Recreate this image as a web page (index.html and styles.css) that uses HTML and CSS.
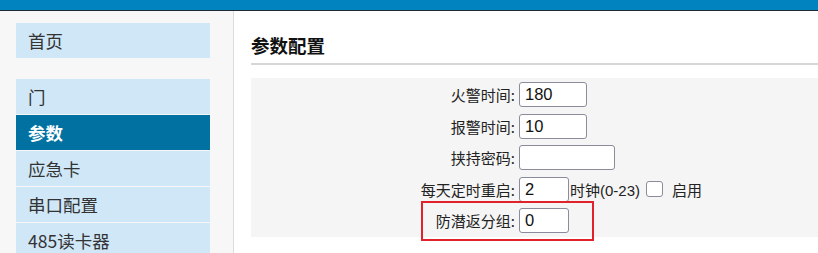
FILE: index.html
```html
<!DOCTYPE html>
<html lang="zh-CN">
<head>
<meta charset="utf-8">
<title>参数配置</title>
<link rel="stylesheet" href="styles.css">
</head>
<body>
<div class="topbar"></div>
<div class="main">
  <nav class="sidebar">
    <ul class="menu">
      <li class="item">首页</li>
    </ul>
    <ul class="menu menu-second">
      <li class="item">门</li>
      <li class="item active">参数</li>
      <li class="item">应急卡</li>
      <li class="item">串口配置</li>
      <li class="item">485读卡器</li>
    </ul>
  </nav>
  <section class="content">
    <h3 class="title">参数配置</h3>
    <div class="panel">
      <div class="form">
        <label class="label">火警时间:</label>
        <div class="field"><input class="input w68" type="text" value="180"></div>
        <label class="label">报警时间:</label>
        <div class="field"><input class="input w68" type="text" value="10"></div>
        <label class="label">挟持密码:</label>
        <div class="field"><input class="input w96" type="text" value=""></div>
        <label class="label">每天定时重启:</label>
        <div class="field"><input class="input w50" type="text" value="2"><span class="hint">时钟(0-23)</span><span class="check"></span><span class="enable">启用</span></div>
        <label class="label">防潜返分组:</label>
        <div class="field"><input class="input w50" type="text" value="0"></div>
      </div>
      <div class="highlight"></div>
    </div>
  </section>
</div>
</body>
</html>
```
FILE: styles.css
```css
html, body {
  margin: 0;
  padding: 0;
  background: #ffffff;
  font-family: "Noto Sans CJK SC", "Liberation Sans", sans-serif;
  color: #222;
}
.topbar {
  height: 10px;
  background: #0083be;
  border-bottom: 1px solid #1c2a35;
}
.main {
  display: flex;
  height: 242px;
}
.sidebar {
  width: 234px;
  box-sizing: border-box;
  background: #f7f7f7;
  border-right: 1px solid #dcdcdc;
  padding: 12px 23px 0 16px;
  flex: none;
}
.menu {
  list-style: none;
  margin: 0;
  padding: 0;
}
.menu-second {
  margin-top: 21px;
}
.item {
  height: 35px;
  line-height: 35px;
  margin-bottom: 1px;
  background: #d0e7f8;
  padding-left: 12px;
  font-size: 17.5px;
  color: #333;
  white-space: nowrap;
}
.item.active {
  background: #0071a1;
  color: #fff;
  font-weight: bold;
}
.content {
  flex: 1;
  padding-left: 17px;
  min-width: 0;
}
.title {
  margin: 21px 0 0 0;
  height: 26px;
  line-height: 26px;
  font-size: 18.5px;
  font-weight: bold;
  color: #111;
  padding-bottom: 5px;
  border-bottom: 2px solid #d6d6d6;
}
.panel {
  position: relative;
  margin-top: 13px;
  background: #f5f5f5;
  padding: 4px 0;
}
.form {
  display: grid;
  grid-template-columns: 264px auto;
  column-gap: 4px;
  row-gap: 6.5px;
  align-items: center;
}
.label {
  text-align: right;
  font-size: 15px;
  color: #222;
  white-space: nowrap;
}
.field {
  display: flex;
  align-items: center;
  height: 25px;
}
.input {
  box-sizing: border-box;
  height: 25px;
  border: 1px solid #8b8b9b;
  border-radius: 3px;
  background: #fff;
  padding: 0 5px;
  font-family: "Liberation Sans", sans-serif;
  font-size: 16.5px;
  color: #111;
  outline: none;
  margin: 0;
}
.w68 { width: 68px; }
.w96 { width: 96px; }
.w50 { width: 50px; }
.hint {
  font-family: "Liberation Sans", "Noto Sans CJK SC", sans-serif;
  font-size: 15px;
  margin-left: 1px;
  color: #222;
}
.check {
  display: inline-block;
  width: 17px;
  height: 16px;
  box-sizing: border-box;
  border: 1px solid #8b8b9b;
  border-radius: 3px;
  background: #fff;
  margin-left: 6px;
}
.enable {
  font-size: 15px;
  margin-left: 9px;
  color: #222;
}
.highlight {
  position: absolute;
  left: 170px;
  top: 123px;
  width: 173px;
  height: 40px;
  box-sizing: border-box;
  border: 2px solid #e2222b;
}
```
